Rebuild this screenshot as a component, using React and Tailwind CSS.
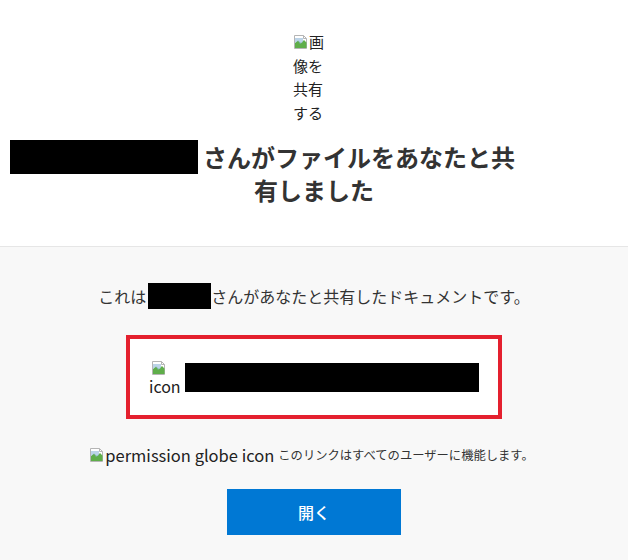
import React from 'react';

const BrokenImg = ({ className = '' }) => (
    <svg className={className} width="16" height="16" viewBox="0 0 16 16">
        <path d="M1.5 1.5h9l3 3v10h-12z" fill="#fff" stroke="#b5b5b5" />
        <path d="M10.5 1.5v3h3" fill="none" stroke="#b5b5b5" />
        <path d="M2 9l3-2.5 3 2.5 3-3 2.5 2.5V14H2z" fill="#5fae4a" />
        <path d="M2 4h8v4L7 10 5 7 2 9z" fill="#8fb8d8" opacity="0.6" />
    </svg>
);

const App = () => {
    return (
        <div
            className="min-h-[560px] w-[628px] bg-[#f8f8f8] text-[#333]"
            style={{ fontFamily: '"Noto Sans CJK JP", "Noto Sans", sans-serif' }}
        >
            <div className="border-b border-[#e6e6e6] bg-white pb-[40px] pt-[30px]">
                <div className="flex justify-center">
                    <div className="w-[42px] text-[15px] leading-[23.5px] text-[#222]">
                        <BrokenImg className="inline-block align-[-2px]" />
                        画像を共有する
                    </div>
                </div>
                <h1 className="mt-[16px] text-[24px] font-bold leading-[32px] text-[#333]">
                    <div className="flex items-center pl-[10px]">
                        <span className="mr-[5px] inline-block h-[34px] w-[188px] bg-black" />
                        <span>さんがファイルをあなたと共</span>
                    </div>
                    <div className="text-center">有しました</div>
                </h1>
            </div>

            <div className="flex flex-col items-center">
                <p className="mt-[36px] flex items-center text-[16px] leading-[26px] text-[#333]">
                    これは
                    <span className="ml-[2px] inline-block h-[26px] w-[63px] bg-black" />
                    さんがあなたと共有したドキュメントです。
                </p>

                <div className="mt-[26px] flex h-[84px] w-[376px] items-center border-[4px] border-[#e4202e] bg-white pl-[19px]">
                    <div className="flex flex-col items-start pt-[2px] text-[16px] leading-[20px] text-[#222]">
                        <BrokenImg className="ml-[2px]" />
                        <span>icon</span>
                    </div>
                    <span className="ml-[4px] inline-block h-[29px] w-[294px] bg-black" />
                </div>

                <div className="mt-[24px] flex items-center pr-[5px]">
                    <span className="flex items-center text-[16.5px] text-[#222]">
                        <BrokenImg />
                        permission globe icon
                    </span>
                    <span className="ml-[4px] text-[12.3px] text-[#333]">
                        このリンクはすべてのユーザーに機能します。
                    </span>
                </div>

                <button
                    type="button"
                    className="mt-[21px] flex h-[46px] w-[174px] items-center justify-center bg-[#0078d4] text-[16px] font-medium text-white"
                >
                    開く
                </button>
            </div>
        </div>
    );
};

export default App;
